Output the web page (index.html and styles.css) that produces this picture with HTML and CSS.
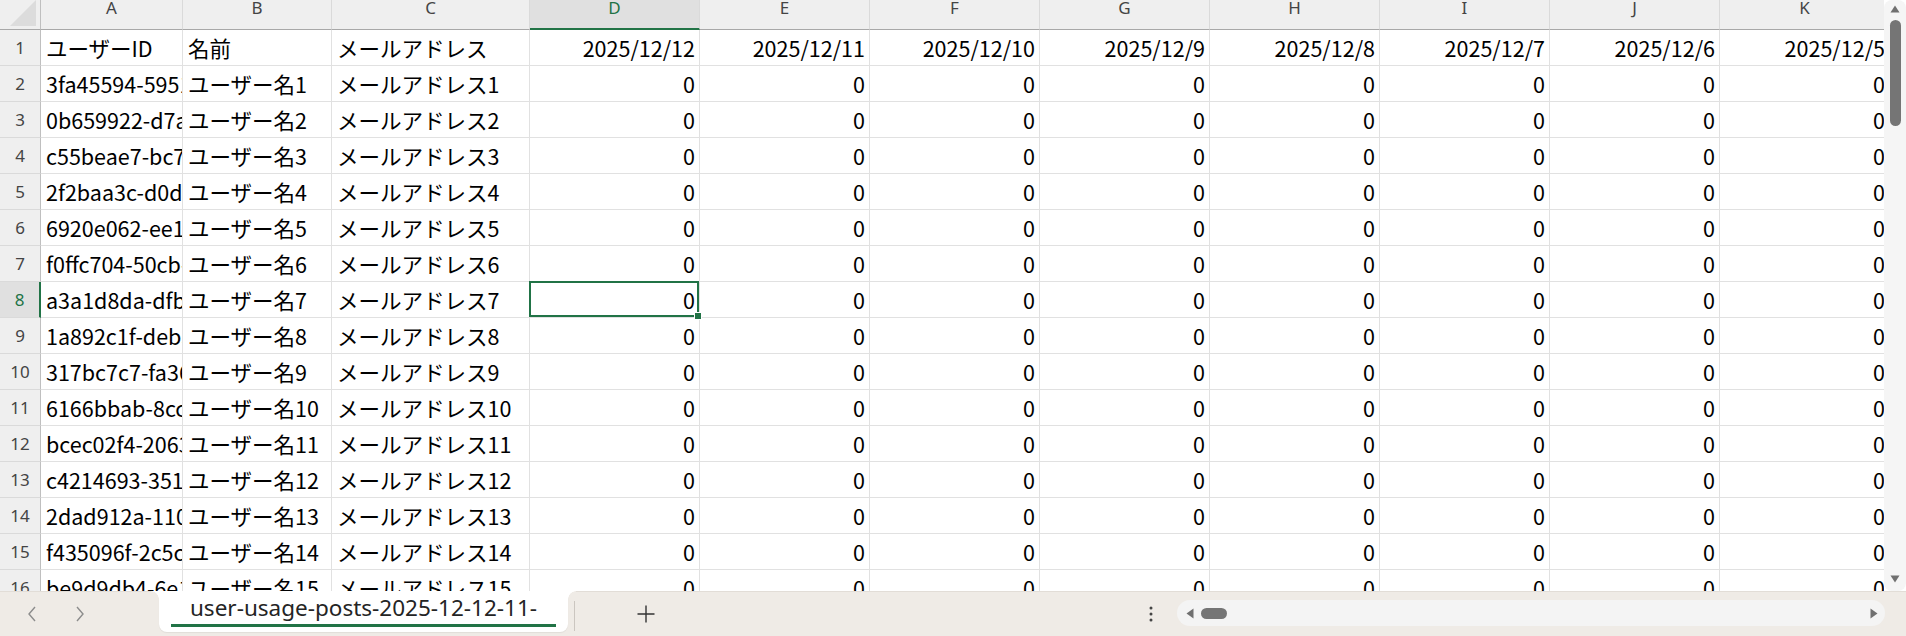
FILE: index.html
```html
<!DOCTYPE html>
<html lang="ja">
<head>
  <meta charset="UTF-8">
  <title>user-usage-posts-2025-12-12-11-</title>
  <link rel="stylesheet" href="styles.css">
</head>
<body>

  <div class="workspace">
    <div class="sheet">
      <div class="grid" id="grid"></div>
    </div>

    <div class="vscroll">
      <svg class="arrow-up" width="10" height="8" viewBox="0 0 10 8"><path d="M5 0.5 L9.5 7.5 L0.5 7.5 Z" fill="#707070"/></svg>
      <div class="vthumb"></div>
      <div class="vspace"></div>
      <svg class="arrow-down" width="10" height="8" viewBox="0 0 10 8"><path d="M0.5 0.5 L9.5 0.5 L5 7.5 Z" fill="#707070"/></svg>
    </div>
  </div>

  <footer class="tabbar">
    <div class="tab-nav">
      <svg width="10" height="18" viewBox="0 0 10 18"><path d="M8 2 L2 9 L8 16" fill="none" stroke="#8c8c8c" stroke-width="1.4"/></svg>
      <svg width="10" height="18" viewBox="0 0 10 18"><path d="M2 2 L8 9 L2 16" fill="none" stroke="#8c8c8c" stroke-width="1.4"/></svg>
    </div>

    <div class="sheet-tab">
      <span>user-usage-posts-2025-12-12-11-</span>
    </div>

    <div class="tab-sep"></div>

    <div class="add-sheet">
      <svg width="18" height="18" viewBox="0 0 18 18"><path d="M9 0.5 V17.5 M0.5 9 H17.5" stroke="#333" stroke-width="1.4"/></svg>
    </div>

    <div class="more">
      <svg width="4" height="18" viewBox="0 0 4 18"><circle cx="2" cy="3" r="1.5" fill="#444"/><circle cx="2" cy="9" r="1.5" fill="#444"/><circle cx="2" cy="15" r="1.5" fill="#444"/></svg>
    </div>

    <div class="hscroll">
      <svg width="8" height="11" viewBox="0 0 8 11"><path d="M7.5 0.5 V10.5 L0.5 5.5 Z" fill="#707070"/></svg>
      <div class="hthumb"></div>
      <div class="hspace"></div>
      <svg width="8" height="11" viewBox="0 0 8 11"><path d="M0.5 0.5 V10.5 L7.5 5.5 Z" fill="#707070"/></svg>
    </div>
  </footer>

  <script>
    const ids = [
      "3fa45594-5951-4f2a-9c1e-7d2b0e8a41c3",
      "0b659922-d7a4-4b6e-8f21-c93a5d70e112",
      "c55beae7-bc72-4e18-a0d5-61f93b2c8e47",
      "2f2baa3c-d0d9-4a37-b6c2-e850f14d9a26",
      "6920e062-ee14-4c8b-9d7f-23a6b51e0c98",
      "f0ffc704-50cb-4d92-a1e3-8b7c264f05da",
      "a3a1d8da-dfb5-4e61-87c0-f1924d3b6a57",
      "1a892c1f-deb3-4f07-b94a-5c2e81d0a6f3",
      "317bc7c7-fa36-4a9d-8e12-0d45c7b93e21",
      "6166bbab-8cc0-4b3f-a7d6-e29f1058c4b7",
      "bcec02f4-2063-4e5a-91b8-7f0d36a2c5e9",
      "c4214693-3517-4d2c-b08e-a6c95f1e2d74",
      "2dad912a-110e-4f86-9a3c-d7b2e04f6c18",
      "f435096f-2c5c-4a71-8d9e-3b6f0a27e5c2",
      "be9d9db4-6e1a-4c05-b2f7-94e8d13a6b0f"
    ];
    const letters = ["A","B","C","D","E","F","G","H","I","J","K"];
    const dates = [];
    for (let d = 12; d >= 5; d--) dates.push("2025/12/" + d);

    const grid = document.getElementById("grid");
    const activeCol = 3; // D
    const activeRow = 8;

    function add(cls, text) {
      const div = document.createElement("div");
      div.className = cls;
      if (text !== undefined) div.textContent = text;
      grid.appendChild(div);
      return div;
    }

    // column headers
    const corner = add("corner");
    corner.innerHTML = '<svg width="40" height="29" viewBox="0 0 40 29"><path d="M10 26 L36 26 L36 0 Z" fill="#dcdcdc"/></svg>';
    letters.forEach((l, i) => add("colhead" + (i === activeCol ? " active" : ""), l));

    for (let r = 1; r <= 16; r++) {
      add("rowhead" + (r === activeRow ? " active" : ""), r);
      let values;
      if (r === 1) {
        values = ["ユーザーID", "名前", "メールアドレス"].concat(dates);
      } else {
        const n = r - 1;
        values = [ids[n - 1], "ユーザー名" + n, "メールアドレス" + n];
        for (let i = 0; i < 8; i++) values.push("0");
      }
      values.forEach((v, c) => {
        let cls = "cell";
        if (c >= 3) cls += " num";
        if (r === activeRow && c === activeCol) cls += " selected";
        add(cls, v);
      });
    }
  </script>

</body>
</html>
```

FILE: styles.css
```css
html, body {
  margin: 0;
  height: 100%;
  overflow: hidden;
  background-color: #fff;
  font-family: "Noto Sans CJK JP", "Noto Sans", sans-serif;
  color: #000;
}

body {
  display: flex;
  flex-direction: column;
}

.workspace {
  flex: 1;
  display: flex;
  min-height: 0;
}

.sheet {
  flex: 1;
  overflow: hidden;
  min-width: 0;
}

.grid {
  display: grid;
  grid-template-columns: 41px 142px 149px 198px repeat(8, 170px);
  grid-template-rows: 30px;
  grid-auto-rows: 36px;
  width: 1890px;
}

/* headers */
.corner {
  background-color: #efefef;
  border-right: 1px solid #bfbfbf;
  border-bottom: 1px solid #a8a8a8;
  box-sizing: border-box;
}

.corner svg {
  display: block;
}

.colhead {
  background-color: #efefef;
  border-right: 1px solid #dadada;
  border-bottom: 1px solid #a8a8a8;
  box-sizing: border-box;
  font-family: "Noto Sans", sans-serif;
  font-size: 17px;
  line-height: 15px;
  color: #444;
  text-align: center;
}

.colhead.active {
  background-color: #e0e0e0;
  color: #217346;
  border-bottom: 2px solid #217346;
}

.rowhead {
  background-color: #efefef;
  border-right: 1px solid #bfbfbf;
  border-bottom: 1px solid #dadada;
  box-sizing: border-box;
  font-family: "Noto Sans", sans-serif;
  font-size: 17px;
  line-height: 35px;
  color: #444;
  text-align: center;
}

.rowhead.active {
  background-color: #e0e0e0;
  color: #217346;
  border-right: 2px solid #217346;
}

/* cells */
.cell {
  border-right: 1px solid #e1e1e1;
  border-bottom: 1px solid #e1e1e1;
  box-sizing: border-box;
  padding: 0 4px 0 5px;
  font-size: 21.5px;
  line-height: 35px;
  white-space: nowrap;
  overflow: hidden;
}

.cell.num {
  text-align: right;
}

.cell.selected {
  position: relative;
  overflow: visible;
}

.cell.selected::before {
  content: "";
  position: absolute;
  left: -1px;
  top: -1px;
  right: 0;
  bottom: 0;
  border: 2px solid #217346;
}

.cell.selected::after {
  content: "";
  position: absolute;
  right: -3px;
  bottom: -3px;
  width: 6px;
  height: 6px;
  background-color: #217346;
  border: 1px solid #fff;
}

/* vertical scrollbar */
.vscroll {
  width: 22px;
  background-color: #f5f5f5;
  border-radius: 8px;
  display: flex;
  flex-direction: column;
  align-items: center;
  padding: 5px 0 8px;
  box-sizing: border-box;
}

.vthumb {
  width: 11px;
  height: 106px;
  margin-top: 7px;
  margin-left: 1px;
  background-color: #757575;
  border-radius: 6px;
}

.vspace {
  flex: 1;
}

/* sheet tabs */
.tabbar {
  height: 45px;
  flex-shrink: 0;
  display: flex;
  align-items: flex-start;
  background-color: #efebe6;
  border-top: 1px solid #e2ddd7;
  box-sizing: border-box;
}

.tab-nav {
  width: 159px;
  height: 44px;
  display: flex;
  align-items: center;
  padding-left: 27px;
  gap: 38px;
  box-sizing: border-box;
}

.tab-nav svg {
  display: block;
}

.sheet-tab {
  position: relative;
  width: 409px;
  height: 41px;
  margin-top: -1px;
  padding: 0 12px;
  box-sizing: border-box;
  background-color: #fff;
  border-radius: 0 0 8px 8px;
  box-shadow: 0 1px 1px rgba(0,0,0,0.06);
  text-align: center;
  font-family: "Noto Sans", sans-serif;
  font-size: 22.5px;
  color: #242424;
}

.sheet-tab::before,
.sheet-tab::after {
  content: "";
  position: absolute;
  top: 0;
  width: 8px;
  height: 8px;
}

.sheet-tab::before {
  left: -8px;
  background: radial-gradient(circle at 0 100%, #efebe6 7.5px, #fff 8px);
}

.sheet-tab::after {
  right: -8px;
  background: radial-gradient(circle at 100% 100%, #efebe6 7.5px, #fff 8px);
}

.sheet-tab span {
  display: block;
  border-bottom: 3px solid #217346;
  line-height: 33px;
  white-space: nowrap;
}

.tab-sep {
  width: 1px;
  height: 30px;
  margin: 9px 0 0 6px;
  background-color: #cbc6c0;
}

.add-sheet {
  margin: 13px 0 0 62px;
}

.add-sheet svg,
.more svg,
.hscroll svg {
  display: block;
}

.more {
  margin: 13px 0 0 494px;
}

.hscroll {
  width: 708px;
  height: 26px;
  margin: 8px 0 0 24px;
  background-color: #f4f4f4;
  border-radius: 13px;
  display: flex;
  align-items: center;
  padding: 0 7px 0 9px;
  box-sizing: border-box;
}

.hthumb {
  width: 26px;
  height: 11px;
  margin-left: 7px;
  background-color: #757575;
  border-radius: 6px;
}

.hspace {
  flex: 1;
}
```
